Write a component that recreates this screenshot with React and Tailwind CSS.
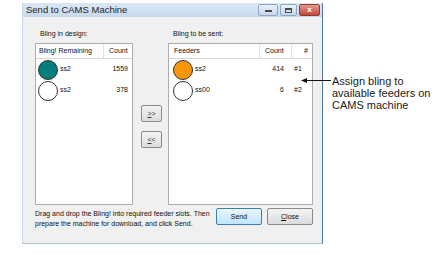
const ui = { fontFamily: '"Liberation Sans", Arial, sans-serif' }

function Disc({ color }) {
  return (
    <span
      className="w-[20px] h-[20px] rounded-full border border-[#333] shrink-0"
      style={{ backgroundColor: color }}
    />
  )
}

function LeftRow({ color, name, count }) {
  return (
    <div className="flex items-center h-[21px] pl-[2px]">
      <Disc color={color} />
      <span className="ml-[2px] flex-1">{name}</span>
      <span className="w-[29px] text-right pr-[4px]">{count}</span>
    </div>
  )
}

function RightRow({ color, name, count, slot }) {
  return (
    <div className="flex items-center h-[21px] pl-[4px]">
      <Disc color={color} />
      <span className="ml-[2px] flex-1">{name}</span>
      <span className="w-[32px] text-right pr-[7px]">{count}</span>
      <span className="w-[21px] pl-[3px]">{slot}</span>
    </div>
  )
}

function SmallButton({ children }) {
  return (
    <button className="w-[21px] h-[17px] rounded-[2px] border border-[#8a8a8a] bg-gradient-to-b from-[#f4f4f4] to-[#dcdcdc] text-[7px] leading-none text-[#333]">
      {children}
    </button>
  )
}

export default function App() {
  return (
    <div className="relative w-[443px] h-[257px] bg-white text-[#111]" style={ui}>
      <div className="flex pt-[3px] pl-[22px]">
        <div className="w-[301px] h-[241px] flex flex-col border-l border-[#c9d6e6] border-r border-r-[#4f77a6] border-b border-b-[#a9c3df] bg-[#f0f0f0]">
          <div className="h-[14px] flex items-start justify-between bg-gradient-to-b from-[#dbe7f5] to-[#c8d9ee]">
            <span className="pl-[3px] pt-[1px] text-[9.5px] leading-[12px] text-[#1e1e1e] whitespace-nowrap shrink-0">Send to CAMS Machine</span>
            <div className="flex gap-[2px] pr-[2px] pt-[1px]">
              <span className="w-[20px] h-[12px] rounded-[2px] border border-[#8ea7c4] bg-gradient-to-b from-[#eaf1f9] to-[#c6d6ea] flex items-end justify-center pb-[3px]">
                <span className="w-[7px] h-[2px] bg-[#4a4a4a]" />
              </span>
              <span className="w-[17px] h-[12px] rounded-[2px] border border-[#8ea7c4] bg-gradient-to-b from-[#eaf1f9] to-[#c6d6ea] flex items-center justify-center">
                <span className="w-[7px] h-[5px] border border-[#4a4a4a] border-t-2" />
              </span>
              <span className="w-[21px] h-[12px] rounded-[2px] border border-[#8f3b32] bg-gradient-to-b from-[#e29a8f] to-[#c3453a] text-white text-[8px] leading-[10px] font-bold flex items-center justify-center">
                x
              </span>
            </div>
          </div>
          <div className="flex-1 pl-[12px] pr-[9px] pt-[10px] text-[7px]">
            <div className="flex">
              <div className="w-[98px] flex flex-col">
                <span className="pl-[5px] h-[16px] leading-[14px]">Bling in design:</span>
                <div className="h-[162px] border border-[#adadad] bg-white">
                  <div className="flex h-[15px] items-center border-b border-[#d5d5d5]">
                    <span className="flex-1 pl-[3px]">Bling! Remaining</span>
                    <span className="w-[29px] h-full flex items-center pl-[5px] border-l border-[#e3e3e3]">Count</span>
                  </div>
                  <LeftRow color="#057f7d" name="ss2" count="1559" />
                  <LeftRow color="#ffffff" name="ss2" count="378" />
                </div>
              </div>
              <div className="w-[35px] flex flex-col gap-[9px] pl-[8px] pt-[78px]">
                <SmallButton><u>&gt;</u>&gt;</SmallButton>
                <SmallButton><u>&lt;</u>&lt;</SmallButton>
              </div>
              <div className="w-[145px] flex flex-col">
                <span className="pl-[5px] h-[16px] leading-[14px]">Bling to be sent:</span>
                <div className="h-[162px] border border-[#adadad] bg-white">
                  <div className="flex h-[15px] items-center border-b border-[#d5d5d5]">
                    <span className="flex-1 pl-[5px]">Feeders</span>
                    <span className="w-[32px] h-full flex items-center pl-[5px] border-l border-[#e3e3e3]">Count</span>
                    <span className="w-[21px] h-full flex items-center pl-[12px] border-l border-[#e3e3e3]">#</span>
                  </div>
                  <RightRow color="#f7960d" name="ss2" count="414" slot="#1" />
                  <RightRow color="#ffffff" name="ss00" count="6" slot="#2" />
                </div>
              </div>
            </div>
            <div className="flex items-start mt-[3px]">
              <p className="w-[181px] leading-[10px] pt-[1px]">
                Drag and drop the Bling! into required feeder slots. Then<br />prepare the machine for download, and click Send.
              </p>
              <button className="w-[46px] h-[17px] rounded-[2px] border border-[#3c7fb1] bg-gradient-to-b from-[#eaf6fd] to-[#bee6fd] text-[7px] leading-none">
                Send
              </button>
              <button className="ml-[5px] w-[46px] h-[17px] rounded-[2px] border border-[#8a8a8a] bg-gradient-to-b from-[#f4f4f4] to-[#dcdcdc] text-[7px] leading-none">
                <u>C</u>lose
              </button>
            </div>
          </div>
        </div>
        <p className="ml-[9px] mt-[72px] text-[11px] leading-[12px] text-[#1a1a1a]">
          Assign bling to<br />available feeders on<br />CAMS machine
        </p>
      </div>
      <svg className="absolute left-[300px] top-[76px]" width="32" height="9" viewBox="0 0 32 9">
        <line x1="3" y1="4.5" x2="31" y2="4.5" stroke="#111" strokeWidth="1" />
        <path d="M1 4.5 L7 2 L7 7 Z" fill="#111" />
      </svg>
    </div>
  )
}
